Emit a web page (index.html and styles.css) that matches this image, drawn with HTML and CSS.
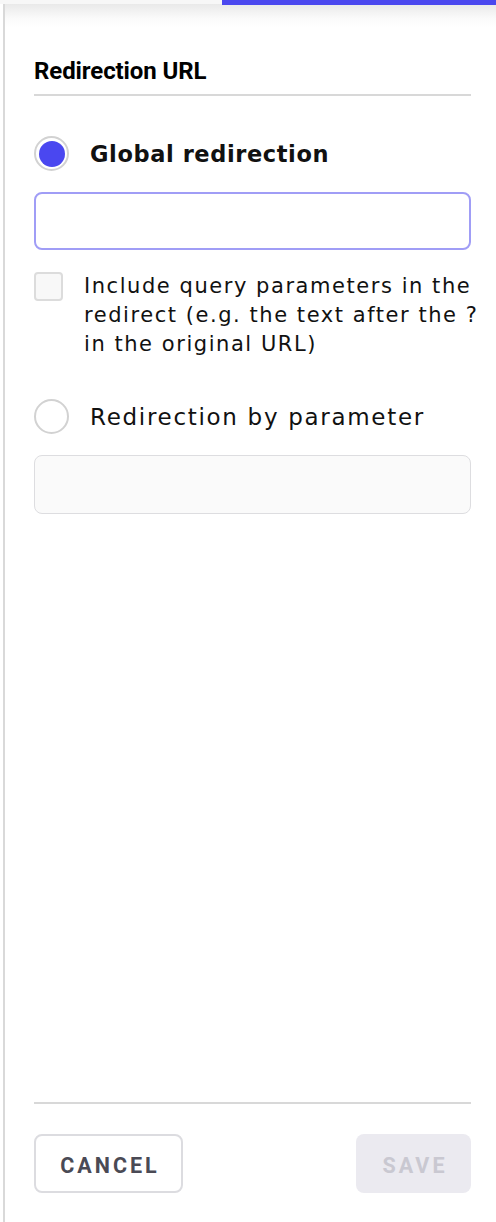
FILE: index.html
```html
<!DOCTYPE html>
<html>
<head>
<meta charset="utf-8">
<link rel="stylesheet" href="styles.css">
</head>
<body>
<div class="topbar">
  <div class="topbar-left"></div>
  <div class="topbar-accent"></div>
</div>
<div class="panel">
  <div class="content">
    <h2 class="heading">Redirection URL</h2>
    <label class="radio-row">
      <span class="radio radio-on"><span class="radio-dot"></span></span>
      <span class="radio-label bold">Global redirection</span>
    </label>
    <div class="input input-active"></div>
    <label class="check-row">
      <span class="checkbox"></span>
      <span class="check-label">Include query parameters in the redirect (e.g. the text after the ? in the original URL)</span>
    </label>
    <label class="radio-row second">
      <span class="radio"></span>
      <span class="radio-label">Redirection by parameter</span>
    </label>
    <div class="input input-disabled"></div>
  </div>
  <div class="footer">
    <button class="btn btn-cancel">CANCEL</button>
    <button class="btn btn-save">SAVE</button>
  </div>
</div>
</body>
</html>
```
FILE: styles.css
```css
* { box-sizing: border-box; }
html, body {
  margin: 0;
  padding: 0;
  width: 496px;
  height: 1222px;
  background: #fff;
  overflow: hidden;
}
body {
  display: flex;
  flex-direction: column;
  font-family: "DejaVu Sans", sans-serif;
  color: #111;
}
.topbar {
  display: flex;
  height: 4px;
  flex: none;
}
.topbar-left {
  width: 222px;
  background: #f7f7f7;
}
.topbar-accent {
  flex: 1;
  height: 5px;
  background: #4b48ef;
  position: relative;
  z-index: 1;
}
.panel {
  flex: 1;
  margin-left: 3px;
  border-left: 2px solid #d9d9d9;
  background: linear-gradient(#e9e9e9 0px, #fafafa 14px, #fff 24px);
  display: flex;
  flex-direction: column;
}
.content {
  padding: 53px 25px 0 29px;
  display: flex;
  flex-direction: column;
}
.heading {
  margin: 0;
  font-family: Roboto, "Liberation Sans", sans-serif;
  font-weight: 700;
  font-size: 24px;
  line-height: 28px;
  letter-spacing: -0.1px;
  padding-bottom: 9px;
  border-bottom: 2px solid #d8d8d8;
  color: #000;
}
.radio-row {
  display: flex;
  align-items: center;
  gap: 21px;
  margin-top: 40px;
}
.radio {
  width: 35px;
  height: 35px;
  border-radius: 50%;
  border: 2px solid #d2d2d2;
  background: #fff;
  display: flex;
  align-items: center;
  justify-content: center;
  flex: none;
}
.radio-dot {
  width: 26px;
  height: 26px;
  border-radius: 50%;
  background: #4a47f0;
}
.radio-label {
  font-size: 23px;
  line-height: 30px;
  letter-spacing: 1.7px;
  color: #111;
}
.bold {
  font-weight: 700;
  font-size: 22.5px;
  letter-spacing: 0.6px;
}
.input {
  height: 59px;
  border-radius: 8px;
  margin-top: 21px;
}
.input-active {
  height: 58px;
  border: 2px solid #a09df6;
  background: #fff;
}
.input-disabled {
  border: 1.5px solid #dddde0;
  background: #fafafa;
}
.check-row {
  display: flex;
  align-items: flex-start;
  gap: 21px;
  margin-top: 22px;
}
.checkbox {
  width: 29px;
  height: 29px;
  flex: none;
  border: 2px solid #dcdcdc;
  border-radius: 4px;
  background: #f8f8f8;
}
.check-label {
  font-size: 21px;
  line-height: 29px;
  letter-spacing: 1.55px;
  margin-right: -12px;
  color: #111;
}
.footer {
  margin: auto 25px 0 29px;
  border-top: 2px solid #d8d8d8;
  padding: 30px 0 29px;
  display: flex;
  justify-content: space-between;
}
.btn {
  height: 59px;
  border-radius: 8px;
  font-family: Roboto, "Liberation Sans", sans-serif;
  font-weight: 700;
  font-size: 21.5px;
  letter-spacing: 3px;
  padding: 4px 0 0 3px;
}
.btn-cancel {
  width: 149px;
  background: #fff;
  border: 2px solid #dcdce0;
  color: #4a4a55;
}
.btn-save {
  width: 115px;
  background: #ebeaf0;
  border: none;
  color: #c9c8d1;
}
```
